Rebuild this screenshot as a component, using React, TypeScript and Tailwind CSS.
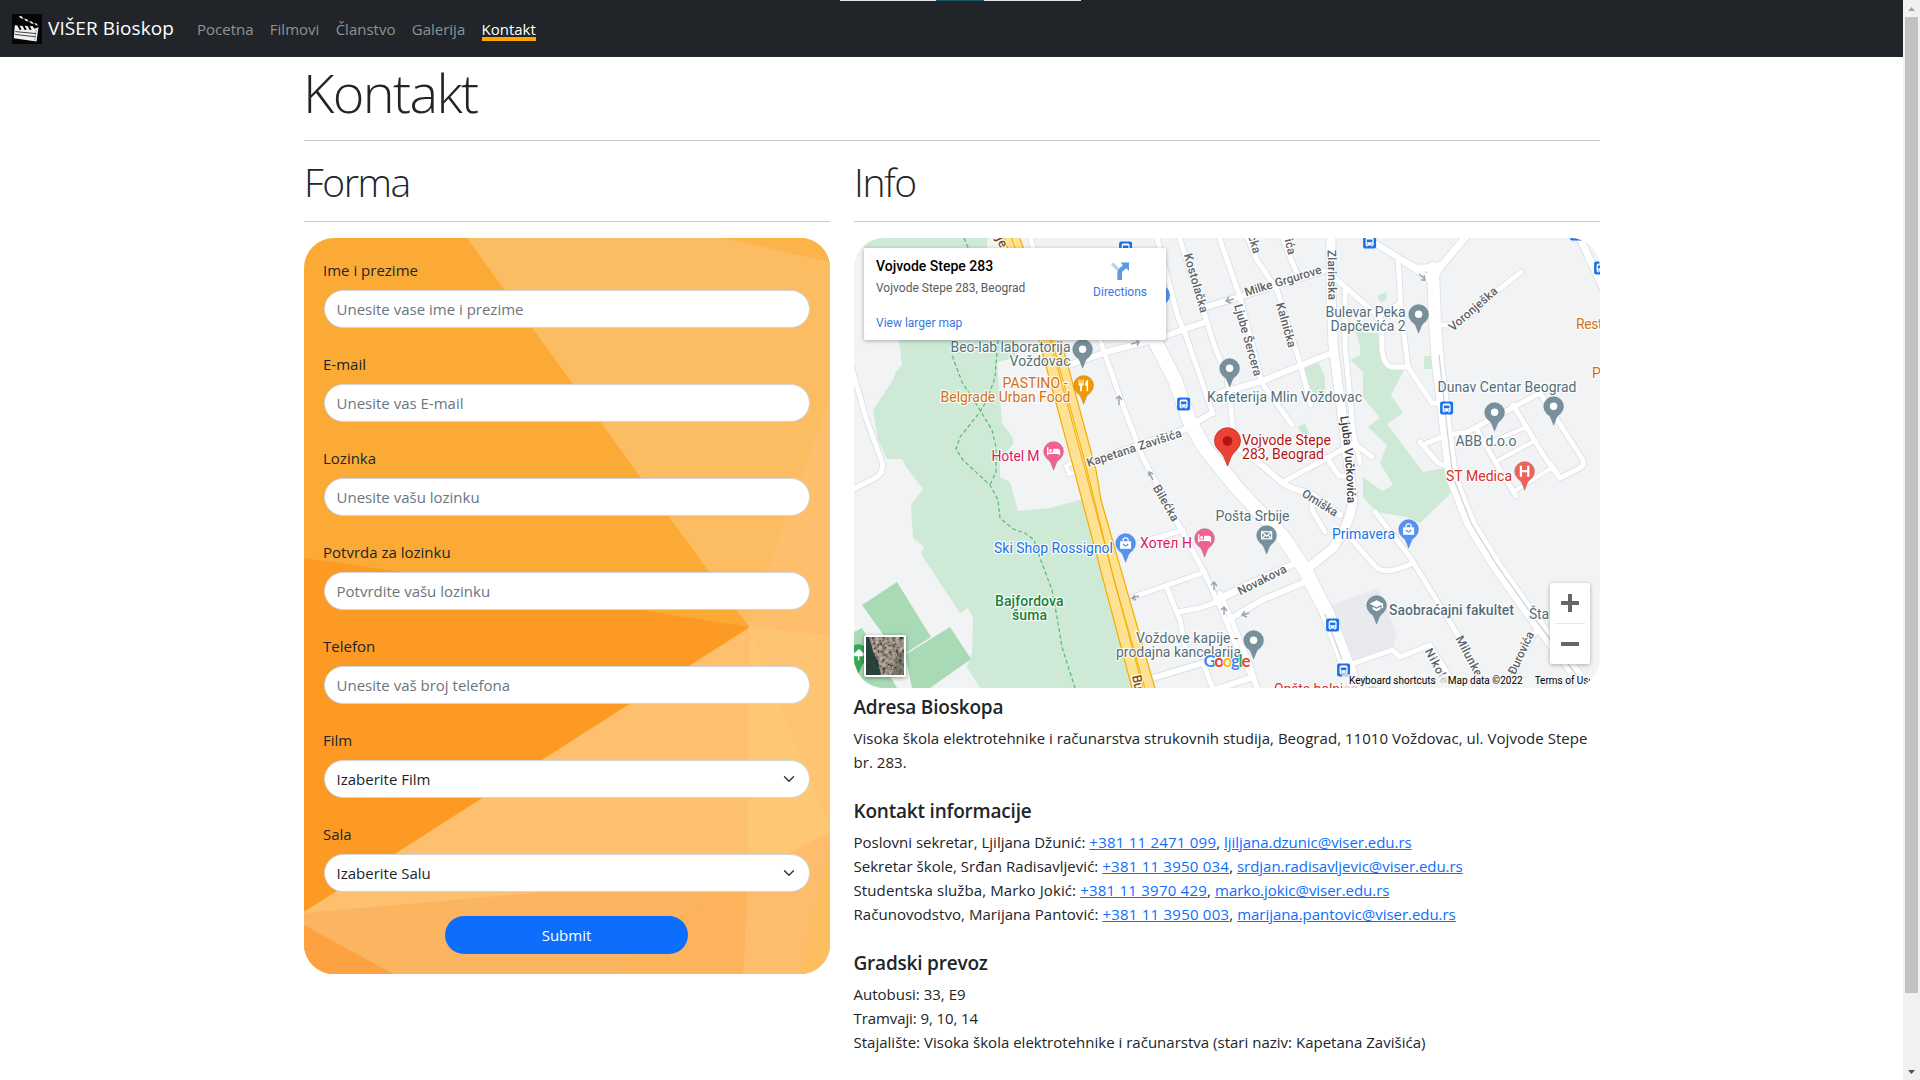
import type { ReactNode } from 'react'

const NAV = ['Pocetna', 'Filmovi', 'Članstvo', 'Galerija']

const FIELDS = [
  { label: 'Ime i prezime', hint: 'Unesite vase ime i prezime' },
  { label: 'E-mail', hint: 'Unesite vas E-mail' },
  { label: 'Lozinka', hint: 'Unesite vašu lozinku' },
  { label: 'Potvrda za lozinku', hint: 'Potvrdite vašu lozinku' },
  { label: 'Telefon', hint: 'Unesite vaš broj telefona' },
]

const SELECTS = [
  { label: 'Film', value: 'Izaberite Film' },
  { label: 'Sala', value: 'Izaberite Salu' },
]

const CONTACTS = [
  { who: 'Poslovni sekretar, Ljiljana Džunić:', tel: '+381 11 2471 099', mail: 'ljiljana.dzunic@viser.edu.rs', track: 'tracking-[0px]' },
  { who: 'Sekretar škole, Srđan Radisavljević:', tel: '+381 11 3950 034', mail: 'srdjan.radisavljevic@viser.edu.rs', track: 'tracking-[0.03px]' },
  { who: 'Studentska služba, Marko Jokić:', tel: '+381 11 3970 429', mail: 'marko.jokic@viser.edu.rs', track: 'tracking-[0.11px]' },
  { who: 'Računovodstvo, Marijana Pantović:', tel: '+381 11 3950 003', mail: 'marijana.pantovic@viser.edu.rs', track: 'tracking-[0.05px]' },
]

function ClapperIcon() {
  return (
    <svg width="30" height="30" viewBox="0 0 30 30" className="block">
      <rect width="30" height="30" fill="#060606" />
      <path d="M7 1.8l3 .6 1.6 2.6-3.4-.9zM12 4.4l3 .8 1.8 2.6-3.2-1zM17.2 6.8l2.9.9 1.9 2.6-3.2-1zM22.2 9l2.4.6 1.4 2-2.4-.5z" fill="#f2f2f2" />
      <path d="M2.8 11.2l2.6.3 2.2 4.4 2-.2-2-4 2.9.3 2.2 4 2-.2-2-4 2.9.3 2.1 4 2-.4-2-3.6 3 .2 1.6 2.4 4.2-1.4-2 14.2L1.8 24.2z" fill="#f2f2f2" />
      <path d="M3.4 17.6l20.8 2M2.9 20.4l20.8 2.4" stroke="#111" strokeWidth="0.8" />
      <path d="M24.2 15.5l-1.6 11" stroke="#777" strokeWidth="0.6" />
    </svg>
  )
}

function Navbar() {
  return (
    <nav className="flex h-[57px] items-start bg-[#212529] text-[15px] leading-6 text-[#909294]">
      <div className="flex pl-3 pt-3.5">
        <ClapperIcon />
        <span className="ml-1.5 w-[149px] text-[19px] leading-[28px] tracking-[0.09px] text-white">VIŠER Bioskop</span>
      </div>
      <ul className="flex gap-[16.3px] pt-[17px]">
        {NAV.map((n) => (
          <li key={n}>{n}</li>
        ))}
        <li className="h-[24px] border-b-4 border-[#ffa500] text-white">Kontakt</li>
      </ul>
    </nav>
  )
}

function FormBackground() {
  return (
    <svg className="absolute inset-0 h-full w-full" viewBox="304 238 526 736" preserveAspectRatio="none">
      <rect x="304" y="238" width="526" height="736" fill="#fbab35" />
      <path d="M467 238H830V640L749 627Z" fill="#fcbc62" />
      <path d="M724 238L830 262V238Z" fill="#fcb349" />
      <path d="M830 397L767 571L749 627L830 635Z" fill="#febe6c" />
      <path d="M304 558L395 571L749 627L304 912Z" fill="#fd9a24" />
      <path d="M304 912L749 628V974H304Z" fill="#fec06f" />
      <path d="M304 913L534 893L748 874L744 974H304Z" fill="#fbb560" />
      <path d="M612 974L693 907L730 876L748 874L744 974Z" fill="#fdb25c" />
      <path d="M304 925L393 974H304Z" fill="#fea141" />
      <path d="M749 627L830 635V974H743.500L748 892Z" fill="#fec774" />
      <path d="M749 627L830 635V830Z" fill="#fec373" />
      <path d="M830 832L789 853L748 874L743.500 974H830Z" fill="#fdbd6d" />
      <path d="M830 843L801 974H830Z" fill="#febd5e" />
    </svg>
  )
}

function ContactForm() {
  return (
    <form className="relative h-[736px] overflow-hidden rounded-[30px] text-[15px] leading-6">
      <FormBackground />
      <div className="relative flex flex-col px-5 pt-5">
        {FIELDS.map((f) => (
          <div key={f.label} className="mb-6">
            <label className="-ml-px mb-2 block pt-px leading-[23px]">{f.label}</label>
            <input
              className="block h-[38px] w-full rounded-[20px] border border-[#ced4da] bg-white pb-px pl-[11.5px] pr-3 placeholder:text-[#6c757d] placeholder:opacity-100"
              placeholder={f.hint}
            />
          </div>
        ))}
        {SELECTS.map((s) => (
          <div key={s.label} className="mb-6">
            <label className="-ml-px mb-2 block pt-px leading-[23px]">{s.label}</label>
            <div className="flex h-[38px] items-center justify-between rounded-[20px] border border-[#ced4da] bg-white pl-[11.5px] pr-3">
              <span>{s.value}</span>
              <svg width="16" height="12" viewBox="0 0 16 16" fill="none" stroke="#343a40" strokeWidth="2" strokeLinecap="round" strokeLinejoin="round">
                <path d="m2 5 6 6 6-6" />
              </svg>
            </div>
          </div>
        ))}
        <button type="button" className="ml-[121px] h-[38px] w-[243px] rounded-[20px] bg-[#0d6efd] text-white">
          Submit
        </button>
      </div>
    </form>
  )
}

/* [path, width] of the streets, in the map's own coordinates */
const ROADS: [string, number][] = [
  ['M850 362L866 418L882 462Q884 472 877 477L850 491', 5],
  ['M1030 234L1034 252L1100 340L1122 403L1143 458L1171 511L1203 570L1222 611L1238 650L1260 692', 5],
  ['M1063 367L1110 351L1150 341L1203 323', 6],
  ['M1203 308L1232 299L1262 290L1323 271', 6],
  ['M1156 234L1178 317L1186 336L1195 362L1213 414', 5],
  ['M1178 234L1204 312L1214 345L1227 377L1230 400L1233 430', 5],
  ['M1084 466L1110 455L1183 430L1212 413', 6],
  ['M1072 463L1066 466L1069 474L1078 471', 4],
  ['M1218 234L1240 297L1262 383L1292 425', 5],
  ['M1246 234L1257 260L1277 290L1300 363L1311 405', 5],
  ['M1281 234L1292 262L1298 275', 5],
  ['M1220 393L1262 381L1332 353', 6],
  ['M1345 290V345L1353 430L1360 463', 5],
  ['M1335 278L1377 315L1382 322V350Q1384 366 1392 367H1408', 5],
  ['M1398 258L1401 310L1408 367L1432 403H1443', 5],
  ['M1377 318L1400 303', 5],
  ['M1360 234L1407 263L1432 282', 6],
  ['M1405 262L1416 268H1433L1443 264L1468 234', 7],
  ['M1433 282L1444 262', 5],
  ['M1443 325H1451L1469 316L1493 294L1521 272', 5],
  ['M1420 442L1438 463L1446 466', 5],
  ['M1427 443L1447 435L1467 432L1497 416L1540 393L1583 460Q1585 465 1580 468L1560 478L1550 463', 5],
  ['M1513 405L1536 443L1553 470', 5],
  ['M1477 430L1500 470L1516 496', 5],
  ['M1487 444L1526 427', 4],
  ['M1497 461L1536 440', 4],
  ['M1513 492L1553 467', 4],
  ['M1578 234L1605 292', 7],
  ['M1232 444L1258 462L1278 479Q1286 488 1310 493L1340 515', 6],
  ['M1283 482L1320 462L1354 443L1372 457', 5],
  ['M1327 458L1339 476H1348', 5],
  ['M1312 503V510L1325 532', 5],
  ['M1216 600L1255 581L1298 562', 6],
  ['M1230 619L1262 600L1305 582', 6],
  ['M1352 540L1376 567Q1386 576 1413 563', 5],
  ['M1375 512L1410 557L1453 627L1466 650L1487 692', 5],
  ['M1352 664L1392 650L1400 657L1430 645L1450 677L1455 692', 5],
  ['M1538 628L1520 657L1508 692', 5],
  ['M1140 543L1183 530', 5],
  ['M1133 597L1205 572', 5],
  ['M1167 588L1180 620L1186 650', 5],
  ['M1178 612L1200 608L1214 603L1240 590', 5],
  ['M1153 678L1203 663L1222 656', 6],
  ['M1203 663L1214 692', 5],
  ['M1214 690L1250 678', 6],
  ['M1220 593L1230 616L1250 665L1258 692', 5],
  ['M1331 234V290L1333 345L1345 437L1353 500Q1350 525 1333 548L1308 568', 9],
  ['M1433 268L1435 323L1438 363L1447 437L1452 477L1470 523L1497 567L1537 623L1590 692', 12],
  ['M1153 330L1156 343L1175 380L1189 420L1204 447L1237 488L1283 537L1305 570L1327 613L1350 673L1356 692', 14],
]

/* [head x, head y, colour, glyph] */
const PINS: [number, number, string, string][] = [
  [1082, 349, '#78909c', 'dot'],
  [1229, 368, '#78909c', 'dot'],
  [1418, 314, '#78909c', 'dot'],
  [1494, 412, '#78909c', 'dot'],
  [1553, 406, '#78909c', 'dot'],
  [1253, 640, '#78909c', 'dot'],
  [1266, 535, '#78909c', 'mail'],
  [1376, 605, '#78909c', 'school'],
  [1083, 385, '#f29900', 'food'],
  [1053, 451, '#f06292', 'bed'],
  [1204, 538, '#f06292', 'bed'],
  [1125, 543, '#5491f5', 'bag'],
  [1408, 529, '#5491f5', 'bag'],
  [1524, 471, '#f0635a', 'H'],
  [858, 654, '#34a853', 'tree'],
  [1372, 696, '#f0635a', 'dot'],
]

const BUSES: [number, number][] = [
  [1125, 248],
  [1183, 404],
  [1369, 242],
  [1446, 408],
  [1576, 234],
  [1600, 268],
  [1332, 625],
  [1343, 670],
]

function Glyph({ kind }: { kind: string }) {
  if (kind === 'dot') return <circle r="3.700" fill="#fff" />
  if (kind === 'mail')
    return (
      <g fill="none" stroke="#fff" strokeWidth="1.200">
        <rect x="-5" y="-3.500" width="10" height="7" />
        <path d="M-5 -3.500L0 1L5 -3.500M-5 3.500L-1.500 0M5 3.500L1.500 0" />
      </g>
    )
  if (kind === 'school') return <path d="M0 -5L-7 -1.500L0 2L5 -0.500V3H6.500V-1.500ZM-4 1.500V4L0 6L4 4V1.500L0 3.500Z" fill="#fff" />
  if (kind === 'food') return <path d="M-5 -5.500V-1Q-5 0.500 -3.500 0.800V6H-1.700V0.800Q0 0.500 0 -1V-5.500H-1V-2H-2V-5.500H-3V-2H-4V-5.500ZM4.500 -5.500Q1.500 -5 1.500 0.500H3V6H4.500Z" fill="#fff" />
  if (kind === 'bed') return <path d="M-6.500 -4H-5.200V1.200H-0.500V-2.500H4Q6.500 -2.500 6.500 0V4H5.200V2.600H-5.200V4H-6.500ZM-3 -2.200a1.500 1.500 0 1 0 .01 0Z" fill="#fff" />
  if (kind === 'bag')
    return (
      <g>
        <path d="M-5.500 -2H5.500V5.500H-5.500Z" fill="#fff" />
        <path d="M-2.500 -1.500V-3.500Q-2.500 -5.500 0 -5.500Q2.500 -5.500 2.500 -3.500V-1.500" fill="none" stroke="#fff" strokeWidth="1.300" />
        <path d="M-2.500 0.500Q0 4.500 2.500 0.500" fill="none" stroke="#5491f5" strokeWidth="1.300" />
      </g>
    )
  if (kind === 'H') return <path d="M-4.800 -5.500H-2.600V-1.200H2.600V-5.500H4.800V5.500H2.600V1H-2.600V5.500H-4.800Z" fill="#fff" />
  return <path d="M-4 2Q-6 -1 -2 -3Q0 -7 3 -3Q7 0 4 2ZM-.7 2H.7V6H-.7Z" fill="#fff" />
}

interface LabelProps {
  x: number
  y: number
  w: number
  children: string
  fill?: string
  rotate?: number
  size?: number
  weight?: number
  anchor?: 'start' | 'middle'
}

function Label({ x, y, w, children, fill = '#546e7a', rotate = 0, size = 14, weight = 400, anchor = 'start' }: LabelProps) {
  return (
    <text
      x={x}
      y={y}
      textLength={w}
      textAnchor={anchor}
      fontSize={size}
      fontWeight={weight}
      fill={fill}
      stroke="#fff"
      strokeWidth="2.400"
      strokeOpacity="0.850"
      strokeLinejoin="round"
      paintOrder="stroke"
      transform={rotate ? `rotate(${rotate} ${x} ${y})` : undefined}
    >
      {children}
    </text>
  )
}

/* Street names are centred on a point and turned along the street */
const STREETS: [string, number, number, number, number][] = [
  ['Kostolačka', 1196, 283, 61, 74],
  ['Ljube Šercera', 1248, 340, 74, 74],
  ['Kalnička', 1286, 325, 46, 74],
  ['Milke Grgurove', 1283, 281, 80, -17],
  ['Zlarinska', 1332, 275, 50, 89],
  ['Kapetana Zavišića', 1134, 448, 99, -18],
  ['Bilećka', 1166, 503, 40, 60],
  ['Omiška', 1320, 503, 40, 32],
  ['Novakova', 1262, 580, 53, -27],
  ['Voronješka', 1473, 309, 60, -41],
  ['Đurovića', 1521, 653, 46, -65],
  ['Nikole', 1437, 666, 38, 62],
  ['Milunke', 1469, 656, 44, 62],
]

function MapDrawing() {
  return (
    <svg className="absolute inset-0" width="746" height="450" viewBox="854 238 746 450" fontFamily="Roboto, sans-serif">
      <rect x="854" y="238" width="746" height="450" fill="#f1f3f4" />
      {/* parks */}
      <g fill="#ceead6">
        <path d="M850 238H988L985 260L1017 340V357L997 362L1002 423L1013 438V444L1000 460V477L1010 482L1018 511L1050 508L1083 499L1133 688H980L967 667L972 653L973 617L968 608L960 613L921 554L924 547L913 538L911 505L923 489L907 468L902 459H887L878 440L873 410L893 380L895 373L902 365L899 340L868 250Z" />
        <path d="M1362 333H1378L1381 361L1390 370L1405 368L1391 395L1403 413L1387 424L1405 448L1423 472L1450 467L1451 493L1420 523L1407 517L1377 512L1363 497V477L1382 491L1393 485L1380 463L1387 445L1368 427L1380 418L1363 397V372L1350 360L1360 355V345L1353 325H1370Z" />
        <path d="M1302 365L1318 361L1325 378V403L1312 392ZM1377 296L1386 292L1387 298L1381 303ZM1424 356H1432V369H1424ZM1298 427L1305 423L1310 435L1302 434Z" />
      </g>
      <path d="M1332 605L1378 588L1397 633L1393 647L1350 662Z" fill="#e8eaed" />
      <g fill="#a8dab5">
        <path d="M897 582L931 637L903 655H890L885 637L862 605Z" />
        <path d="M905 655L950 627L971 659L930 688H912Z" />
        <path d="M850 634L862 628L875 650L897 688H850Z" />
      </g>
      <g fill="none" stroke="#58b974" strokeWidth="1.200" strokeDasharray="4 2.500">
        <path d="M964 238L969 250M949 330L953 358L962 382L980 410L992 430L996 447V472L990 485" />
        <path d="M998 340L995 377L988 398L980 412L960 437L956 449L963 460L990 485L998 500L1000 518L1013 529L1025 533L1034 540L1040 558L1052 590L1057 617L1062 647L1075 688" />
      </g>
      {/* streets: casing under surface */}
      <g fill="none" stroke="#dadee4" strokeLinecap="round" strokeLinejoin="round">
        {ROADS.map(([d, w]) => (
          <path key={d} d={d} strokeWidth={w + 1.6} />
        ))}
      </g>
      <g fill="none" stroke="#fff" strokeLinecap="round" strokeLinejoin="round">
        {ROADS.map(([d, w]) => (
          <path key={d} d={d} strokeWidth={w} />
        ))}
      </g>
      <path d="M1439 355L1448 437L1453 477L1471 523L1498 567L1538 623L1580 680M1325 614L1342 660" fill="none" stroke="#d0d4da" strokeWidth="1.300" />
      {/* highway */}
      <path d="M1002 232L1039 340L1072 462L1082 500L1133 692H1156L1101 500L1096 470L1061 340L1017 232Z" fill="#fde293" stroke="#f9ab00" strokeWidth="1.200" />
      <path d="M1009 232L1050 340L1083 462L1093 500L1144 692M1052 340L1085 462L1114 580L1146 692" fill="none" stroke="#f9ab00" strokeWidth="1" />
      {/* one-way arrows */}
      <g fill="none" stroke="#9aa0b5" strokeWidth="1.400">
        <path d="M1131 344L1139 342M1136 340L1139 342L1137 346" />
        <path d="M1119 405V396M1116 399L1119 396L1122 400" />
        <path d="M1153 480L1149 472M1149 476L1149 472L1153 474" />
        <path d="M1139 596L1132 598M1135 595L1132 598L1136 600" />
        <path d="M1214 590V582M1211 585L1214 582L1217 586M1224 615V607M1221 610L1224 607L1227 611" />
        <path d="M1249 613L1242 615M1245 611L1242 615L1247 617M1234 299L1226 301M1229 297L1226 301L1231 303" />
        <path d="M1419 274L1425 279M1421 280H1425L1424 275" />
      </g>

      {STREETS.map(([t, x, y, w, a]) => (
        <g key={t} transform={`translate(${x} ${y}) rotate(${a})`}>
          <Label x={0} y={4} w={w} size={12} weight={500} fill="#5f6368" anchor="middle">{t}</Label>
        </g>
      ))}
      <Label x={1248} y={236} w={19} size={12} weight={500} fill="#5f6368" rotate={74}>čka</Label>
      <Label x={1283} y={234} w={22} size={12} weight={500} fill="#5f6368" rotate={76}>vića</Label>
      <path id="ljuba" d="M1340 417Q1347 455 1347.500 515" fill="none" />
      <text fontSize="12" fontWeight="500" fill="#3c4043" stroke="#fff" strokeWidth="2.400" strokeOpacity="0.850" paintOrder="stroke">
        <textPath href="#ljuba" textLength="87">Ljuba Vučkovića</textPath>
      </text>
      <Label x={993} y={232} w={18} size={13} weight={500} fill="#7b4a12" rotate={66}>uje</Label>
      <Label x={1132} y={676} w={24} size={13} weight={500} fill="#7b4a12" rotate={78}>Bule</Label>

      <circle cx="1160" cy="295" r="10" fill="#5491f5" />
      {BUSES.map(([x, y]) => (
        <g key={`${x}-${y}`} transform={`translate(${x + 0.6} ${y})`}>
          <rect x="-6.500" y="-6.500" width="13" height="13" rx="2" fill="#1a73e8" />
          <path d="M-4 -2.500Q-4 -4.500 -2 -4.500H2Q4 -4.500 4 -2.500V3.500H3V4.600H1.800V3.500H-1.800V4.600H-3V3.500H-4Z" fill="#fff" />
          <path d="M-2.800 -2.600H2.800V0.200H-2.800ZM-2.600 1.500H-1.400V2.500H-2.600ZM1.400 1.500H2.600V2.500H1.400Z" fill="#1a73e8" />
        </g>
      ))}
      {PINS.map(([x, y, c, k]) => (
        <g key={`${x}-${y}`} transform={`translate(${x + 0.6} ${y + 0.3})`}>
          <path d="M0 19L-3 11.500Q-4 9.500 -7 7.300A10 10 0 1 1 7 7.300Q4 9.500 3 11.500Z" fill={c} stroke="#455a64" strokeOpacity="0.350" strokeWidth="0.600" />
          <Glyph kind={k} />
        </g>
      ))}

      <Label x={950.5} y={352} w={120}>Beo-lab laboratorija</Label>
      <Label x={1009.5} y={366} w={61}>Voždovac</Label>
      <Label x={1002.5} y={388} w={65} fill="#d5700c">PASTINO -</Label>
      <Label x={940.5} y={402} w={130} fill="#d5700c">Belgrade Urban Food</Label>
      <Label x={991.5} y={461} w={48} fill="#d81b60">Hotel M</Label>
      <Label x={1140} y={548} w={52} fill="#d81b60">Хотел Н</Label>
      <Label x={994} y={553} w={119} fill="#1a73e8">Ski Shop Rossignol</Label>
      <Label x={995} y={606} w={68.500} weight={500} fill="#188038">Bajfordova</Label>
      <Label x={1012} y={620} w={35} weight={500} fill="#188038">šuma</Label>
      <Label x={1325.5} y={317} w={80}>Bulevar Peka</Label>
      <Label x={1330.5} y={331} w={75}>Dapčevića 2</Label>
      <Label x={1207} y={402} w={155}>Kafeterija Mlin Voždovac</Label>
      <Label x={1437.5} y={392} w={139}>Dunav Centar Beograd</Label>
      <Label x={1455.5} y={446} w={61}>ABB d.o.o</Label>
      <Label x={1446} y={481} w={66} fill="#d93025">ST Medica</Label>
      <Label x={1576} y={329} w={34} fill="#d5700c">Resto</Label>
      <Label x={1592} y={378} w={9} fill="#d5700c">P</Label>
      <Label x={1215.5} y={521} w={74}>Pošta Srbije</Label>
      <Label x={1332} y={539} w={63} fill="#1a73e8">Primavera</Label>
      <Label x={1389} y={615} w={125} weight={500}>Saobraćajni fakultet</Label>
      <Label x={1529} y={619} w={20}>Šta</Label>
      <Label x={1136} y={643} w={102}>Voždove kapije -</Label>
      <Label x={1116} y={657} w={125}>prodajna kancelarija</Label>
      <Label x={1274} y={694} w={84} fill="#d93025">Opšta bolnica</Label>

      <path d="M1227.500 466L1224 457Q1222.500 454 1219 450.500A13 13 0 1 1 1236 450.500Q1232.500 454 1231 457Z" fill="#ea4335" stroke="#c5221f" strokeWidth="0.700" />
      <circle cx="1227.500" cy="441" r="4.800" fill="#b31412" />
      <Label x={1242} y={445} w={89} fill="#b31412">Vojvode Stepe</Label>
      <Label x={1242} y={459} w={82} fill="#b31412">283, Beograd</Label>

      <text x="1203.500" y="667" fontSize="17" fontFamily="Lato, sans-serif" textLength="47" stroke="#fff" strokeWidth="1.500" paintOrder="stroke" fontWeight="700">
        <tspan fill="#4285f4">G</tspan><tspan fill="#ea4335">o</tspan><tspan fill="#fbbc04">o</tspan><tspan fill="#4285f4">g</tspan><tspan fill="#34a853">l</tspan><tspan fill="#ea4335">e</tspan>
      </text>
    </svg>
  )
}

function Satellite() {
  return (
    <svg width="38" height="38" viewBox="0 0 38 38" className="block">
      <defs>
        <filter id="grain" x="0" y="0" width="100%" height="100%">
          <feTurbulence type="fractalNoise" baseFrequency="0.300" numOctaves="3" seed="4" />
          <feColorMatrix values="1.500 0.200 0 0 -0.420  1.400 0.200 0 0 -0.420  1.200 0.200 0 0 -0.380  0 0 0 0 1" />
        </filter>
      </defs>
      <rect width="38" height="38" fill="#6b6355" />
      <rect width="38" height="38" filter="url(#grain)" opacity="0.650" />
      <path d="M0 0H3L7 14L12 25L15 38H0Z" fill="#1d3a36" opacity="0.900" />
      <path d="M28 22L38 12V38H26Z" fill="#42503a" opacity="0.400" />
    </svg>
  )
}

function MapCard() {
  return (
    <div className="relative h-[450px] overflow-hidden rounded-[30px] bg-[#f1f3f4] font-[Roboto,sans-serif]">
      <MapDrawing />
      <div className="absolute left-[10px] top-[10px] flex h-[92px] w-[302px] justify-between rounded-[2px] bg-white pl-3 pr-[19px] shadow-[0_1px_4px_rgba(0,0,0,0.3)]">
        <div className="flex flex-col pt-[9px] text-xs leading-[15px]">
          <span className="text-sm font-medium leading-[18px] text-black">Vojvode Stepe 283</span>
          <span className="mt-1.5 text-[#5b5b5b]">Vojvode Stepe 283, Beograd</span>
          <span className="mt-5 text-[#3a75e4]">View larger map</span>
        </div>
        <div className="flex flex-col items-center pt-[13px] text-xs leading-[15px] text-[#3a75e4]">
          <svg width="20" height="20" viewBox="0 0 20 20">
            <path d="M1 3.500L3.500 1.500L9 7L7.500 10.500Z" fill="#b7d2f6" />
            <path d="M7.300 19V12Q7.300 9 9.500 7L13 4.200L10.500 1.500H19V10L16.200 7.200L12.800 10.200Q12 11 12 12.500V19Z" fill="#5c9ae6" />
          </svg>
          <span className="mt-1">Directions</span>
        </div>
      </div>
      <div className="absolute bottom-[11px] left-[10px] rounded-[2px] border-2 border-white shadow-[0_1px_4px_rgba(0,0,0,0.4)]">
        <Satellite />
      </div>
      <div className="absolute bottom-0 right-0 flex h-[14px] w-[258px] items-center gap-3 overflow-hidden whitespace-nowrap bg-[#f5f5f5]/70 pl-[7px] text-[10px] leading-[14px] text-black">
        <span>Keyboard shortcuts</span>
        <span>Map data ©2022</span>
        <span className="w-[55px] overflow-hidden">Terms of Use</span>
      </div>
      <div className="absolute bottom-6 right-[10px] flex h-[81px] w-10 flex-col items-center rounded-[2px] bg-white shadow-[0_1px_4px_rgba(0,0,0,0.3)]">
        <svg width="40" height="40" viewBox="0 0 40 40" fill="#666">
          <path d="M11 18H18V11H22V18H29V22H22V29H18V22H11Z" />
        </svg>
        <div className="h-px w-[30px] bg-[#e6e6e6]" />
        <svg width="40" height="40" viewBox="0 0 40 40" fill="#666">
          <path d="M11 18H29V22H11Z" />
        </svg>
      </div>
    </div>
  )
}

function SubHeading({ children }: { children: ReactNode }) {
  return (
    <h2 className="mt-4 h-[65px] border-b border-[#c8c9ca] pt-px text-[39px] font-light leading-[48px] tracking-[-1.4px]">{children}</h2>
  )
}

function InfoHeading({ children }: { children: ReactNode }) {
  return <h5 className="mb-[7px] pt-px text-[19px] font-semibold leading-6 tracking-[-0.2px]">{children}</h5>
}

function Scrollbar() {
  return (
    <div className="flex h-full w-[17px] shrink-0 flex-col items-center bg-[#f1f1f1]">
      <svg width="17" height="17" viewBox="0 0 17 17">
        <path d="M5 11L8.500 7L12 11Z" fill="#a3a3a3" />
      </svg>
      <div className="h-[976px] w-[13px] bg-[#c1c1c1]" />
      <div className="flex-1" />
      <svg width="17" height="17" viewBox="0 0 17 17">
        <path d="M5 7L8.500 11L12 7Z" fill="#505050" />
      </svg>
    </div>
  )
}

export default function App() {
  return (
    <div className="flex h-[1080px] w-[1920px] overflow-hidden bg-white font-['Open_Sans',sans-serif] text-[15px] text-[#212529]">
      <div className="relative flex-1">
        <Navbar />
        <div className="absolute left-[840px] top-0 flex h-px w-[241px] bg-[#dfe3e3]">
          <div className="ml-24 w-12 bg-[#1b5766]" />
        </div>
        <main className="ml-[304px] w-[1296px]">
          <h1 className="h-[84px] border-b border-[#c8c9ca] pt-[2px] text-[54px] font-light leading-[67px] tracking-[-1.6px]">
            <span className="-ml-px">Kontakt</span>
          </h1>
          <div className="flex gap-6">
            <section className="w-[526px]">
              <SubHeading>Forma</SubHeading>
              <div className="pt-4">
                <ContactForm />
              </div>
            </section>
            <section className="w-[746px]">
              <SubHeading>Info</SubHeading>
              <div className="pb-1.5 pt-4">
                <MapCard />
              </div>
              <div className="-ml-[0.500px] leading-6">
                <InfoHeading>Adresa Bioskopa</InfoHeading>
                <p className="mb-6 tracking-[0.046px]">
                  Visoka škola elektrotehnike i računarstva strukovnih studija, Beograd, 11010 Voždovac, ul. Vojvode Stepe
                  <br />
                  br. 283.
                </p>
                <InfoHeading>Kontakt informacije</InfoHeading>
                <ul className="mb-6">
                  {CONTACTS.map((c) => (
                    <li key={c.tel} className={c.track}>
                      {c.who} <a className="tracking-[0.23px] text-[#0d6efd] underline">{c.tel}</a>,{' '}
                      <a className="tracking-[-0.04px] text-[#0d6efd] underline">{c.mail}</a>
                    </li>
                  ))}
                </ul>
                <InfoHeading>Gradski prevoz</InfoHeading>
                <p>Autobusi: 33, E9</p>
                <p className="tracking-[-0.09px]">Tramvaji: 9, 10, 14</p>
                <p className="tracking-[0.01px]">Stajalište: Visoka škola elektrotehnike i računarstva (stari naziv: Kapetana Zavišića)</p>
              </div>
            </section>
          </div>
        </main>
      </div>
      <Scrollbar />
    </div>
  )
}
